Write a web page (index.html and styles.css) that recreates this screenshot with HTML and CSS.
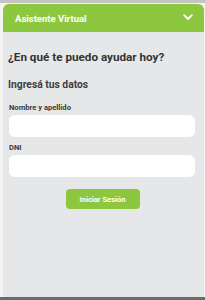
FILE: index.html
```html
<!DOCTYPE html>
<html lang="es">
<head>
<meta charset="utf-8">
<link rel="stylesheet" href="styles.css">
</head>
<body>
<div class="panel">
  <div class="header">
    <span class="title">Asistente Virtual</span>
    <svg class="chev" width="10" height="7" viewBox="0 0 10 7"><path d="M1.2 1.2 L5 5 L8.8 1.2" fill="none" stroke="#fff" stroke-width="1.8" stroke-linecap="round" stroke-linejoin="round"/></svg>
  </div>
  <div class="content">
    <h1 class="question">¿En qué te puedo ayudar hoy?</h1>
    <h2 class="sub">Ingresá tus datos</h2>
    <label class="label first">Nombre y apellido</label>
    <div class="input"></div>
    <label class="label">DNI</label>
    <div class="input"></div>
    <div class="actions"><button class="btn">Iniciar Sesión</button></div>
  </div>
</div>
<div class="bottom"></div>
</body>
</html>
```
FILE: styles.css
```css
html, body { margin: 0; padding: 0; }
body {
  width: 205px;
  height: 300px;
  background: #f4f4f4;
  font-family: Roboto, "Liberation Sans", sans-serif;
  display: flex;
  flex-direction: column;
  border-top: 3px solid #c4c4c4;
  box-sizing: border-box;
  overflow: hidden;
}
.panel {
  margin: 1px 1px 0 3px;
  flex: 1;
  background: #e6e7e8;
  border-radius: 6px 6px 0 0;
  display: flex;
  flex-direction: column;
}
.header {
  height: 28px;
  background: #8dc63f;
  border-radius: 6px 6px 0 0;
  display: flex;
  align-items: center;
  justify-content: space-between;
  padding: 0 11px 0 12px;
}
.title { color: #fff; font-weight: 700; font-size: 9.5px; }
.chev { display: block; margin-top: -2px; }
.content {
  padding: 0 9px 0 5px;
  display: flex;
  flex-direction: column;
}
.question {
  margin: 18px 0 0;
  font-size: 11.7px;
  font-weight: 700;
  color: #333;
}
.sub {
  margin: 14px 0 0;
  font-size: 10.3px;
  font-weight: 700;
  color: #3f3f3f;
}
.label {
  margin: 6px 0 0 1px;
  font-size: 7.6px;
  font-weight: 700;
  color: #3a3a3a;
}
.label.first { margin-top: 12px; }
.input {
  margin: 3px 0 0 1px;
  height: 22px;
  background: #fff;
  border-radius: 6px;
}
.actions { display: flex; justify-content: center; margin-top: 12px; }
.btn {
  margin-left: 2px;
  width: 74px;
  height: 20px;
  border: 0;
  border-radius: 4px;
  background: #8dc63f;
  color: #fff;
  font-family: inherit;
  font-weight: 700;
  font-size: 7.5px;
  padding: 0;
}
.bottom { height: 3px; background: #6b6b6b; }
```
